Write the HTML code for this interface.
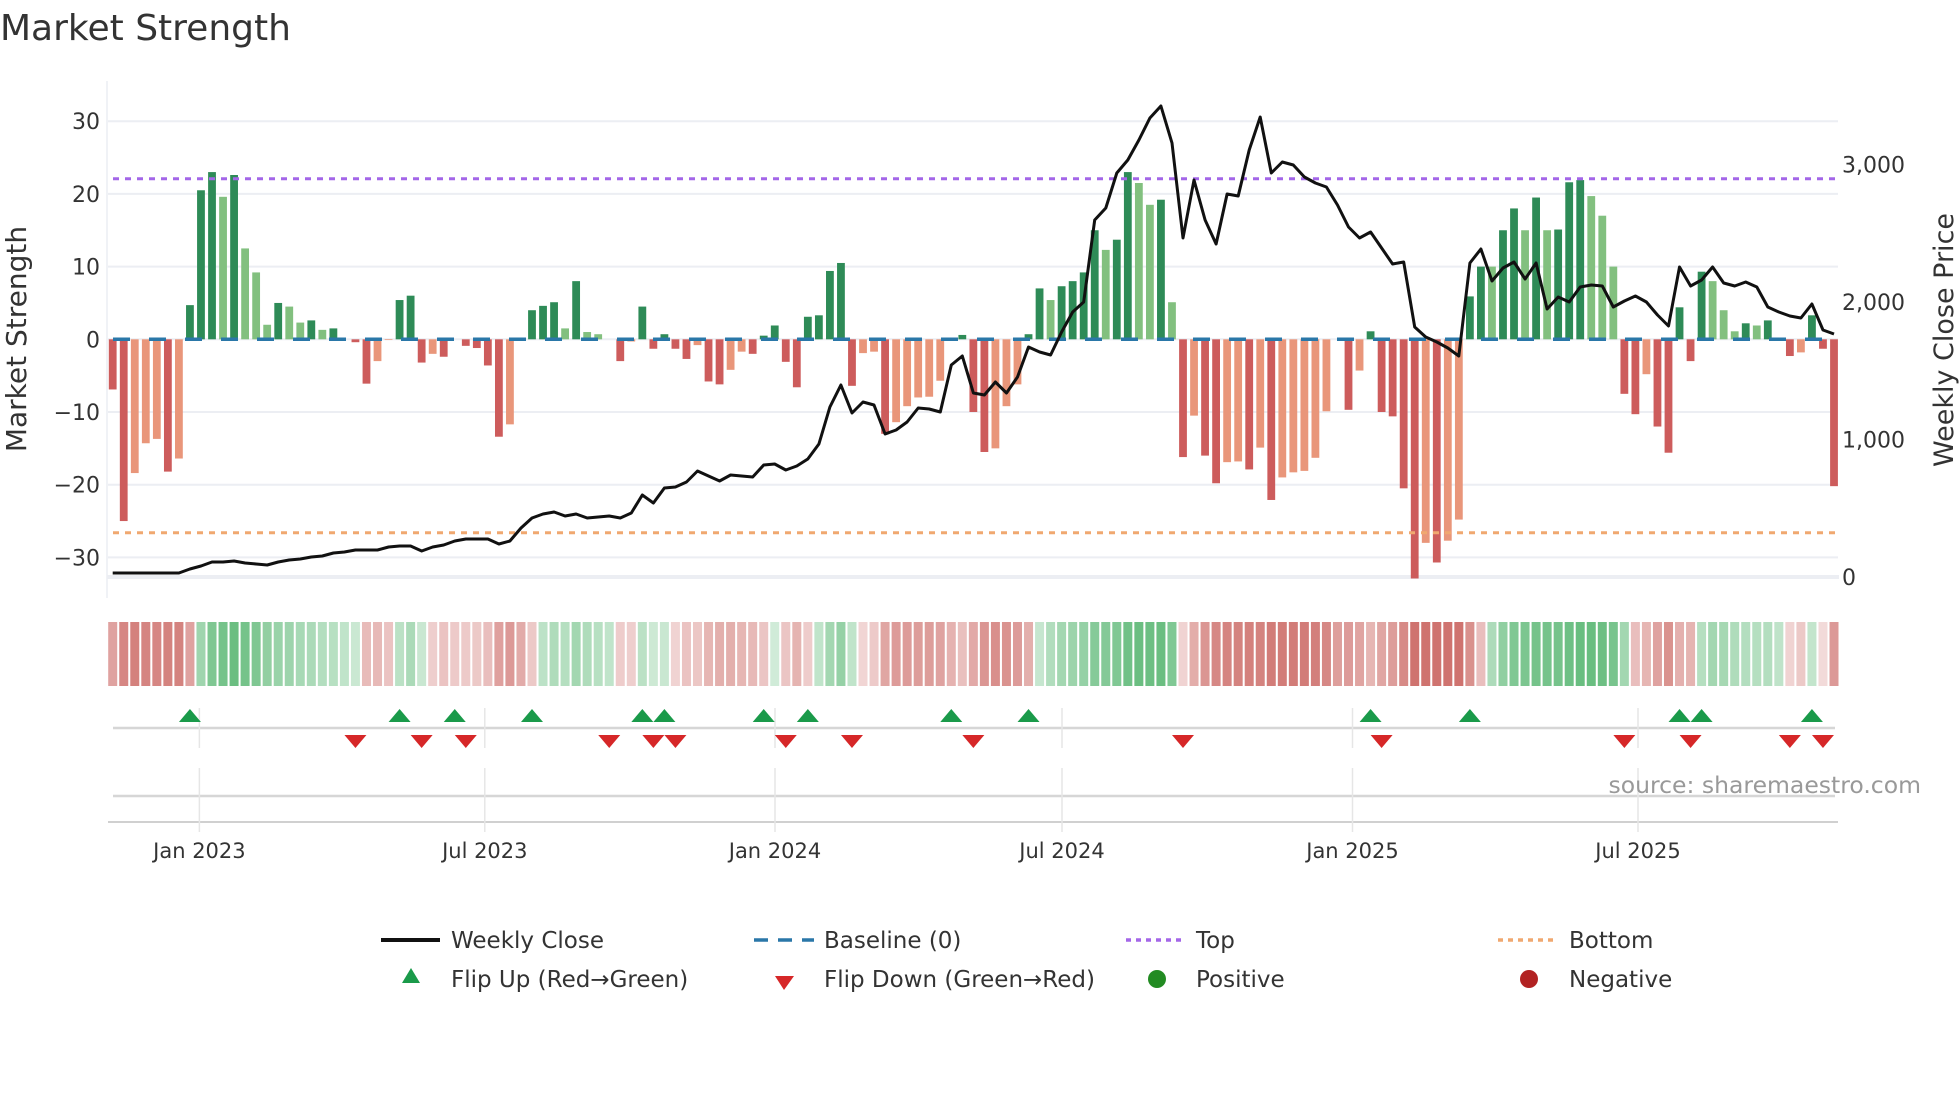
<!DOCTYPE html>
<html><head><meta charset="utf-8">
<style>
html,body{margin:0;padding:0;background:#fff;}
body{width:1960px;height:1102px;overflow:hidden;font-family:"DejaVu Sans","Liberation Sans",sans-serif;}
svg text{font-family:"DejaVu Sans","Liberation Sans",sans-serif;}
</style></head>
<body>
<svg id="s" width="1960" height="1102" xmlns="http://www.w3.org/2000/svg">
<text x="0" y="40" font-size="36" fill="#333">Market Strength</text>
<g id="grid"></g>
<g id="bars"></g>
<g id="lines"></g>
<g id="heat"></g>
<g id="marks"></g>
<text x="1921" y="793" font-size="23.5" fill="#999" text-anchor="end">source: sharemaestro.com</text>
<text transform="translate(26,339) rotate(-90)" font-size="28" fill="#333" text-anchor="middle">Market Strength</text>
<text transform="translate(1953,340) rotate(-90)" font-size="27" fill="#333" text-anchor="middle">Weekly Close Price</text>
<g font-size="23" fill="#333">
<line x1="381" y1="940" x2="440" y2="940" stroke="#111" stroke-width="4"/>
<text x="451" y="948">Weekly Close</text>
<line x1="754" y1="940" x2="814" y2="940" stroke="#2a77a8" stroke-width="3.5" stroke-dasharray="14,10"/>
<text x="824" y="948">Baseline (0)</text>
<line x1="1126" y1="940" x2="1182" y2="940" stroke="#a366e8" stroke-width="3.5" stroke-dasharray="5,5"/>
<text x="1196" y="948">Top</text>
<line x1="1498" y1="940" x2="1554" y2="940" stroke="#f0a870" stroke-width="3.5" stroke-dasharray="5,5"/>
<text x="1569" y="948">Bottom</text>
<polygon points="411,968 402,983 420,983" fill="#1a9a4a"/>
<text x="451" y="987">Flip Up (Red→Green)</text>
<polygon points="784,990 775,976 794,976" fill="#d62728"/>
<text x="824" y="987">Flip Down (Green→Red)</text>
<circle cx="1157" cy="979" r="9" fill="#228b22"/>
<text x="1196" y="987">Positive</text>
<circle cx="1529" cy="979" r="9" fill="#b22222"/>
<text x="1569" y="987">Negative</text>
</g>
</svg>
<script>
var NS="http://www.w3.org/2000/svg";
function el(p,t,a){var e=document.createElementNS(NS,t);for(var k in a)e.setAttribute(k,a[k]);p.appendChild(e);return e;}
var D=1,L=0;
var v=[[-6.9,D],[-25,D],[-18.4,L],[-14.3,L],[-13.7,L],[-18.2,D],[-16.4,L],[4.7,D],[20.5,D],[23,D],[19.6,L],[22.6,D],[12.5,L],[9.2,L],[2,L],[5,D],[4.5,L],[2.3,L],[2.6,D],[1.3,L],[1.5,D],[0,D],[-0.4,D],[-6.1,D],[-3,L],[-0.1,L],[5.4,D],[6,D],[-3.2,D],[-2,L],[-2.4,D],[0,D],[-0.9,D],[-1.2,D],[-3.6,D],[-13.4,D],[-11.7,L],[0,D],[4,D],[4.6,D],
[5.1,D],[1.5,L],[8,D],[1,L],[0.7,L],[0,D],[-3,D],[-0.3,L],[4.5,D],[-1.3,D],[0.7,D],[-1.3,D],[-2.7,D],[-0.8,L],[-5.8,D],[-6.2,D],[-4.2,L],[-1.7,L],[-2,D],[0.5,D],[1.9,D],[-3.1,D],[-6.6,D],[3.1,D],[3.3,D],[9.4,D],[10.5,D],[-6.4,D],[-1.9,L],[-1.7,L],[-13,D],[-11.4,L],[-9.2,L],[-8,L],[-7.9,L],[-5.7,L],[0,D],[0.6,D],[-10,D],[-15.5,D],
[-15,L],[-9.2,L],[-6.2,L],[0.7,D],[7,D],[5.4,L],[7.3,D],[8,D],[9.2,D],[15,D],[12.3,L],[13.7,D],[23,D],[21.5,L],[18.5,L],[19.2,D],[5.1,L],[-16.2,D],[-10.5,L],[-16,D],[-19.8,D],[-16.9,L],[-16.8,L],[-17.9,D],[-14.9,L],[-22.1,D],[-19,L],[-18.3,L],[-18.1,L],[-16.3,L],[-9.9,L],[0,D],[-9.7,D],[-4.3,L],[1.1,D],[-10,D],[-10.6,D],[-20.5,D],[-32.9,D],[-28,L],
[-30.7,D],[-27.7,L],[-24.8,L],[5.9,D],[10,D],[10,L],[15,D],[18,D],[15,L],[19.5,D],[15,L],[15.1,D],[21.6,D],[21.9,D],[19.7,L],[17,L],[10,L],[-7.5,D],[-10.3,D],[-4.8,L],[-12,D],[-15.6,D],[4.4,D],[-3,D],[9.3,D],[8,L],[4,L],[1.1,L],[2.2,D],[1.9,L],[2.6,D],[0,D],[-2.3,D],[-1.8,L],[3.3,D],[-1.3,D],[-20.2,D]];
var py=[573,573,573,573,573,573,573,569,566,562,562,561,563,564,565,562,560,559,557,556,553,552,550,550,550,547,546,546,551,547,545,541,539,539,539,544,541,528,518,514,
512,516,514,518,517,516,518,513,495,503,488,487,482,471,476,481,475,476,477,465,464,470,466,459,444,407,385,413,402,405,434,430,422,408,409,412,365,356,393,395,
382,393,377,347,352,355,332,312,302,220,208,173,160,140,118,106,143,238,180,220,244,194,196,150,117,173,162,165,177,183,187,205,227,238,232,248,264,262,327,337,
342,348,356,263,249,281,268,262,279,263,309,297,302,287,285,286,307,301,296,302,315,326,267,286,280,267,283,286,282,287,307,312,316,318,304,330,334];
var X0=112.7,DX=11.034,Z=339.3,U=7.27;
function xi(i){return X0+i*DX;}
function yv(val){return Z-val*U;}
var g=document.getElementById('grid');
el(g,'line',{x1:107,y1:81,x2:107,y2:598,stroke:'#eceef3','stroke-width':1.5});
el(g,'rect',{x:107,y:575,width:1732,height:4,fill:'#eceef3'});
[30,20,10,0,-10,-20,-30].forEach(function(t){
 var y=yv(t);
 el(g,'line',{x1:108,y1:y,x2:1838,y2:y,stroke:'#eceef3','stroke-width':2});
 var tx=el(g,'text',{x:100,y:y+8,'font-size':22,fill:'#333','text-anchor':'end'});
 tx.textContent=(t<0?'\u2212'+(-t):''+t);
});
[[0,'0'],[1000,'1,000'],[2000,'2,000'],[3000,'3,000']].forEach(function(p){
 var y=577-p[0]*0.1375;
 var tx=el(g,'text',{x:1842,y:y+8,'font-size':22,fill:'#333'});tx.textContent=p[1];
});
var b=document.getElementById('bars');
v.forEach(function(d,i){
 var val=d[0];if(Math.abs(val)<0.05)return;
 var c=val>0?(d[1]?'#2e8b57':'#82c07f'):(d[1]?'#cd5c5c':'#e9967a');
 var y0=yv(Math.max(val,0)),h=Math.abs(val)*U;
 el(b,'rect',{x:xi(i)-3.9,y:y0,width:7.8,height:h,fill:c});
});
var ln=document.getElementById('lines');
el(ln,'line',{x1:113,y1:Z,x2:1838,y2:Z,stroke:'#2a77a8','stroke-width':3.5,'stroke-dasharray':'17,19'});
el(ln,'line',{x1:113,y1:178.7,x2:1838,y2:178.7,stroke:'#a366e8','stroke-width':3,'stroke-dasharray':'6,6'});
el(ln,'line',{x1:113,y1:532.7,x2:1838,y2:532.7,stroke:'#f0a870','stroke-width':3,'stroke-dasharray':'6,6'});
var pts=py.map(function(y,i){return xi(i).toFixed(1)+','+y;}).join(' ');
el(ln,'polyline',{points:pts,fill:'none',stroke:'#111','stroke-width':3,'stroke-linejoin':'round'});
var hg=document.getElementById('heat');
var e=0;
v.forEach(function(d,i){
 e=i==0?d[0]:e*0.55+d[0]*0.45;
 var m=e;var a=Math.min(1,Math.abs(m)/22);a=0.18+0.62*Math.sqrt(a);
 var c=m>=0?'rgba(60,170,90,'+a.toFixed(2)+')':'rgba(195,80,75,'+a.toFixed(2)+')';
 el(hg,'rect',{x:xi(i)-4.5,y:622,width:9,height:64,fill:c});
});
var mk=document.getElementById('marks');
el(mk,'line',{x1:113,y1:728,x2:1835,y2:728,stroke:'#d6d6d6','stroke-width':2.5});
el(mk,'line',{x1:113,y1:796,x2:1835,y2:796,stroke:'#d6d6d6','stroke-width':2.5});
el(mk,'line',{x1:108,y1:822,x2:1838,y2:822,stroke:'#d0d0d0','stroke-width':2});
[[199.4,'Jan 2023'],[484.8,'Jul 2023'],[775,'Jan 2024'],[1062,'Jul 2024'],[1352.5,'Jan 2025'],[1638,'Jul 2025']].forEach(function(t){
 el(mk,'line',{x1:t[0],y1:708,x2:t[0],y2:748,stroke:'#e6e6e6','stroke-width':1.5});
 el(mk,'line',{x1:t[0],y1:768,x2:t[0],y2:832,stroke:'#e6e6e6','stroke-width':1.5});
 var tx=el(mk,'text',{x:t[0],y:858,'font-size':21,fill:'#333','text-anchor':'middle'});tx.textContent=t[1];
});
[7,26,31,38,48,50,59,63,76,83,114,123,142,144,154].forEach(function(i){
 var x=xi(i);el(mk,'polygon',{points:(x)+',709 '+(x-11)+',722 '+(x+11)+',722',fill:'#1a9a4a'});
});
[22,28,32,45,49,51,61,67,78,97,115,137,143,152,155].forEach(function(i){
 var x=xi(i);el(mk,'polygon',{points:(x)+',748 '+(x-11)+',735 '+(x+11)+',735',fill:'#d62728'});
});
</script>
</body></html>
